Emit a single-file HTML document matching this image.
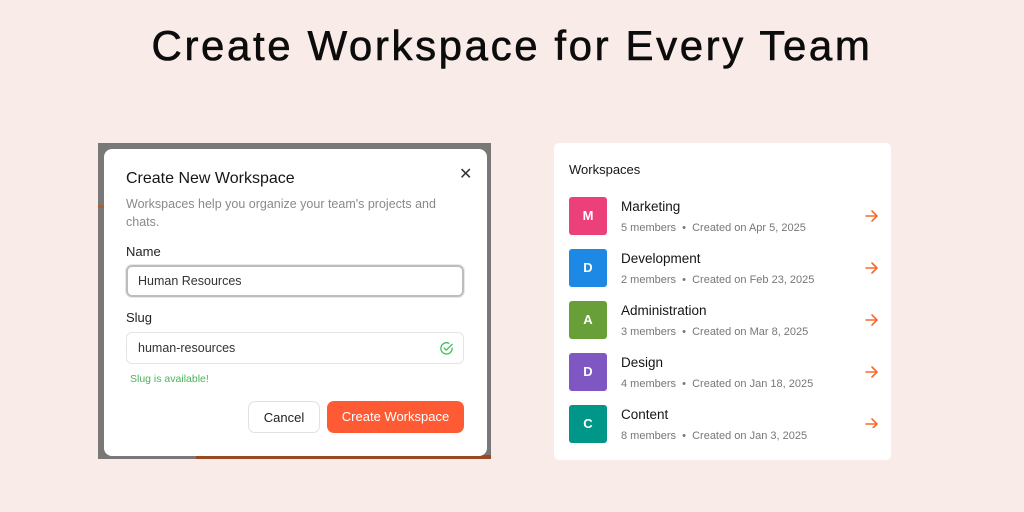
<!DOCTYPE html>
<html><head><style>
*{margin:0;padding:0;box-sizing:border-box}
body{width:1024px;height:512px;background:#f9ebe7;font-family:"Liberation Sans",sans-serif;position:relative;overflow:hidden;color:#111}
h1{position:absolute;top:22px;left:0;width:1024px;text-align:center;font-size:42px;font-weight:normal;letter-spacing:2.6px;-webkit-text-stroke:0.6px #0c0c0c;color:#0c0c0c}
.back{position:absolute;left:98px;top:143px;width:393px;height:316px;background:#7a7877}
.back .o1{position:absolute;left:0;top:62px;width:8px;height:3px;background:#b85a2a}
.back .o2{position:absolute;left:98px;bottom:0;width:295px;height:4px;background:#9a4a22}
.modal{position:absolute;left:104px;top:149px;width:383px;height:307px;background:#fff;border-radius:8px}
.abs{position:absolute}
.t{left:22px;top:21px;font-size:16px;font-weight:500;color:#151515}
.d{left:22px;top:46px;width:340px;font-size:12.5px;line-height:18px;color:#8a8a8a}
.lbl{font-size:13px;color:#222}
.inp{left:22px;width:338px;height:32px;border:1px solid #e4e4e4;border-radius:6px;font-size:12.5px;color:#333;padding:8px 11px}
.x{left:355px;top:15px;font-size:16px;color:#333}
.btn{height:32px;border-radius:7px;font-size:13px;text-align:center;line-height:31px}
.card{position:absolute;left:554px;top:143px;width:337px;height:317px;background:#fff;border-radius:5px}
.row{position:absolute;left:15px;height:38px;width:310px}
.av{position:absolute;left:0;top:0;width:38px;height:38px;border-radius:3px;color:#fff;font-weight:bold;font-size:13px;text-align:center;line-height:38px}
.nm{position:absolute;left:52px;top:2px;font-size:13.5px;color:#151515}
.mt{position:absolute;left:52px;top:25px;font-size:11px;color:#777;white-space:nowrap}
</style></head><body>
<h1>Create Workspace for Every Team</h1>
<div class="back"><div class="o1"></div><div class="o2"></div></div>
<div class="modal">
<div class="abs t">Create New Workspace</div>
<div class="abs x">✕</div>
<div class="abs d">Workspaces help you organize your team's projects and chats.</div>
<div class="abs lbl" style="left:22px;top:95px">Name</div>
<div class="abs inp" style="top:116px;border:2px solid #bdbdbd;box-shadow:0 0 0 1px #e8e8e8;padding:7px 10px">Human Resources</div>
<div class="abs lbl" style="left:22px;top:161px">Slug</div>
<div class="abs inp" style="top:183px">human-resources</div>
<svg class="abs" style="left:335px;top:192px" width="15" height="15" viewBox="0 0 16 16"><path d="M14 7.5A6 6 0 1 1 10.5 2.4" fill="none" stroke="#3cc15a" stroke-width="1.4" stroke-linecap="round"/><path d="M5.5 7.5l2.3 2.3L14 3.5" fill="none" stroke="#3cc15a" stroke-width="1.4" stroke-linecap="round" stroke-linejoin="round"/></svg>
<div class="abs" style="left:26px;top:224px;font-size:10.5px;color:#49b55c">Slug is available!</div>
<div class="abs btn" style="left:144px;top:252px;width:72px;border:1px solid #e2e2e2;color:#222">Cancel</div>
<div class="abs btn" style="left:223px;top:252px;width:137px;background:#fe5a33;color:#fff">Create Workspace</div>
</div>
<div class="card">
<div class="abs" style="left:15px;top:19px;font-size:13px;font-weight:500;color:#151515">Workspaces</div>
<div class="row" style="top:54px"><div class="av" style="background:#ec407a">M</div><div class="nm">Marketing</div><div class="mt">5 members &nbsp;•&nbsp; Created on Apr 5, 2025</div></div>
<div class="row" style="top:106px"><div class="av" style="background:#1e88e5">D</div><div class="nm">Development</div><div class="mt">2 members &nbsp;•&nbsp; Created on Feb 23, 2025</div></div>
<div class="row" style="top:158px"><div class="av" style="background:#689f38">A</div><div class="nm">Administration</div><div class="mt">3 members &nbsp;•&nbsp; Created on Mar 8, 2025</div></div>
<div class="row" style="top:210px"><div class="av" style="background:#7e57c2">D</div><div class="nm">Design</div><div class="mt">4 members &nbsp;•&nbsp; Created on Jan 18, 2025</div></div>
<div class="row" style="top:262px"><div class="av" style="background:#009688">C</div><div class="nm">Content</div><div class="mt">8 members &nbsp;•&nbsp; Created on Jan 3, 2025</div></div>
</div>
<svg style="position:absolute;left:865px;top:208px" width="14" height="220" viewBox="0 0 14 220">
<g fill="none" stroke="#fa6a2c" stroke-width="1.6" stroke-linecap="round" stroke-linejoin="round">
<path d="M1 8h11M7 3l5 5-5 5"/><path d="M1 60h11M7 55l5 5-5 5"/><path d="M1 112h11M7 107l5 5-5 5"/><path d="M1 164h11M7 159l5 5-5 5"/><path d="M1 216h11M7 211l5 5-5 5"/>
</g></svg>
</body></html>
